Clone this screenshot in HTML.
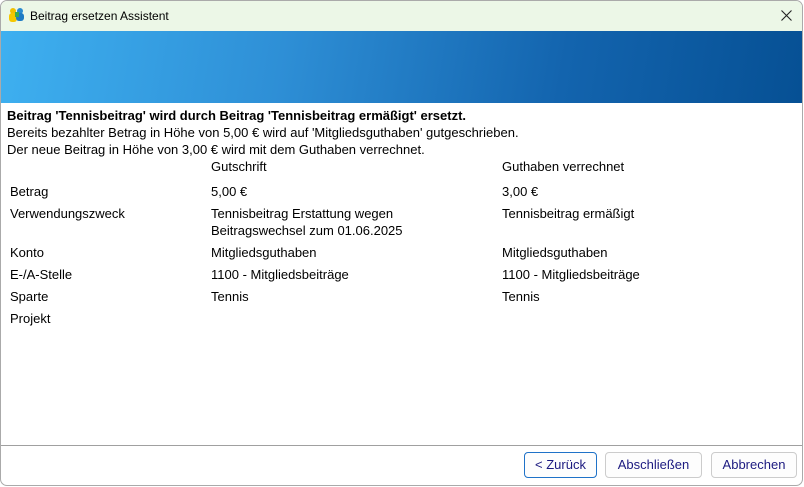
<!DOCTYPE html>
<html><head><meta charset="utf-8"><style>
*{margin:0;padding:0;box-sizing:border-box}
body{width:804px;height:487px;overflow:hidden;background:#fff;font-family:"Liberation Sans",Arial,sans-serif;font-size:13px;color:#000;position:relative}
.win{position:absolute;left:0;top:0;width:803px;height:486px;border:1px solid #aaa;border-radius:7px;overflow:hidden;background:#fff}
.title{height:30px;background:#ecf7e7;position:relative}
.title span{position:absolute;left:29px;top:8px;font-size:12px}
.band{position:absolute;left:0;right:0;top:30px;height:72px;background:linear-gradient(100deg,#3eb0f0 0%,#2e8fd6 35%,#1364ae 70%,#065094 100%)}
.t{position:absolute;white-space:nowrap}
.sep{position:absolute;left:0;right:0;top:444px;border-top:1px solid #a0a0a0}
.btn{position:absolute;top:451px;height:26px;border:1px solid #ccc;border-radius:4px;color:#1c1a80;text-align:center;line-height:24px;background:#fdfdfd}
</style></head><body><div class="win">
<div class="title">
<svg style="position:absolute;left:7px;top:6px" width="17" height="16" viewBox="0 0 17 16"><circle cx="5" cy="4" r="3" fill="#f0c000"/><rect x="1" y="6" width="8" height="9" rx="3" fill="#f5c800"/><circle cx="12" cy="4" r="3" fill="#2a8ad0"/><rect x="8" y="6" width="8" height="8" rx="3" fill="#1e7bc4"/><rect x="7" y="5" width="4" height="5" fill="#3aaa50"/></svg>
<span>Beitrag ersetzen Assistent</span>
<svg style="position:absolute;right:10px;top:9px" width="11" height="11" viewBox="0 0 11 11"><path d="M0.5 0.5L10.5 10.5M10.5 0.5L0.5 10.5" stroke="#222" stroke-width="1.1"/></svg>
</div>
<div class="band"></div>
<div class="t" style="left:6px;top:107px;font-weight:bold">Beitrag 'Tennisbeitrag' wird durch Beitrag 'Tennisbeitrag ermäßigt' ersetzt.</div>
<div class="t" style="left:6px;top:124px">Bereits bezahlter Betrag in Höhe von 5,00 € wird auf 'Mitgliedsguthaben' gutgeschrieben.</div>
<div class="t" style="left:6px;top:141px">Der neue Beitrag in Höhe von 3,00 € wird mit dem Guthaben verrechnet.</div>
<div class="t" style="left:210px;top:158px">Gutschrift</div>
<div class="t" style="left:501px;top:158px">Guthaben verrechnet</div>
<div class="t" style="left:9px;top:183px">Betrag</div>
<div class="t" style="left:210px;top:183px">5,00 €</div>
<div class="t" style="left:501px;top:183px">3,00 €</div>
<div class="t" style="left:9px;top:205px">Verwendungszweck</div>
<div class="t" style="left:210px;top:205px">Tennisbeitrag Erstattung wegen</div>
<div class="t" style="left:210px;top:222px">Beitragswechsel zum 01.06.2025</div>
<div class="t" style="left:501px;top:205px">Tennisbeitrag ermäßigt</div>
<div class="t" style="left:9px;top:244px">Konto</div>
<div class="t" style="left:210px;top:244px">Mitgliedsguthaben</div>
<div class="t" style="left:501px;top:244px">Mitgliedsguthaben</div>
<div class="t" style="left:9px;top:266px">E-/A-Stelle</div>
<div class="t" style="left:210px;top:266px">1100 - Mitgliedsbeiträge</div>
<div class="t" style="left:501px;top:266px">1100 - Mitgliedsbeiträge</div>
<div class="t" style="left:9px;top:288px">Sparte</div>
<div class="t" style="left:210px;top:288px">Tennis</div>
<div class="t" style="left:501px;top:288px">Tennis</div>
<div class="t" style="left:9px;top:310px">Projekt</div>
<div class="sep"></div>
<div class="btn" style="left:523px;width:73px;border-color:#1f72c8">&lt; Zurück</div>
<div class="btn" style="left:604px;width:97px">Abschließen</div>
<div class="btn" style="left:710px;width:86px">Abbrechen</div>
</div></body></html>
